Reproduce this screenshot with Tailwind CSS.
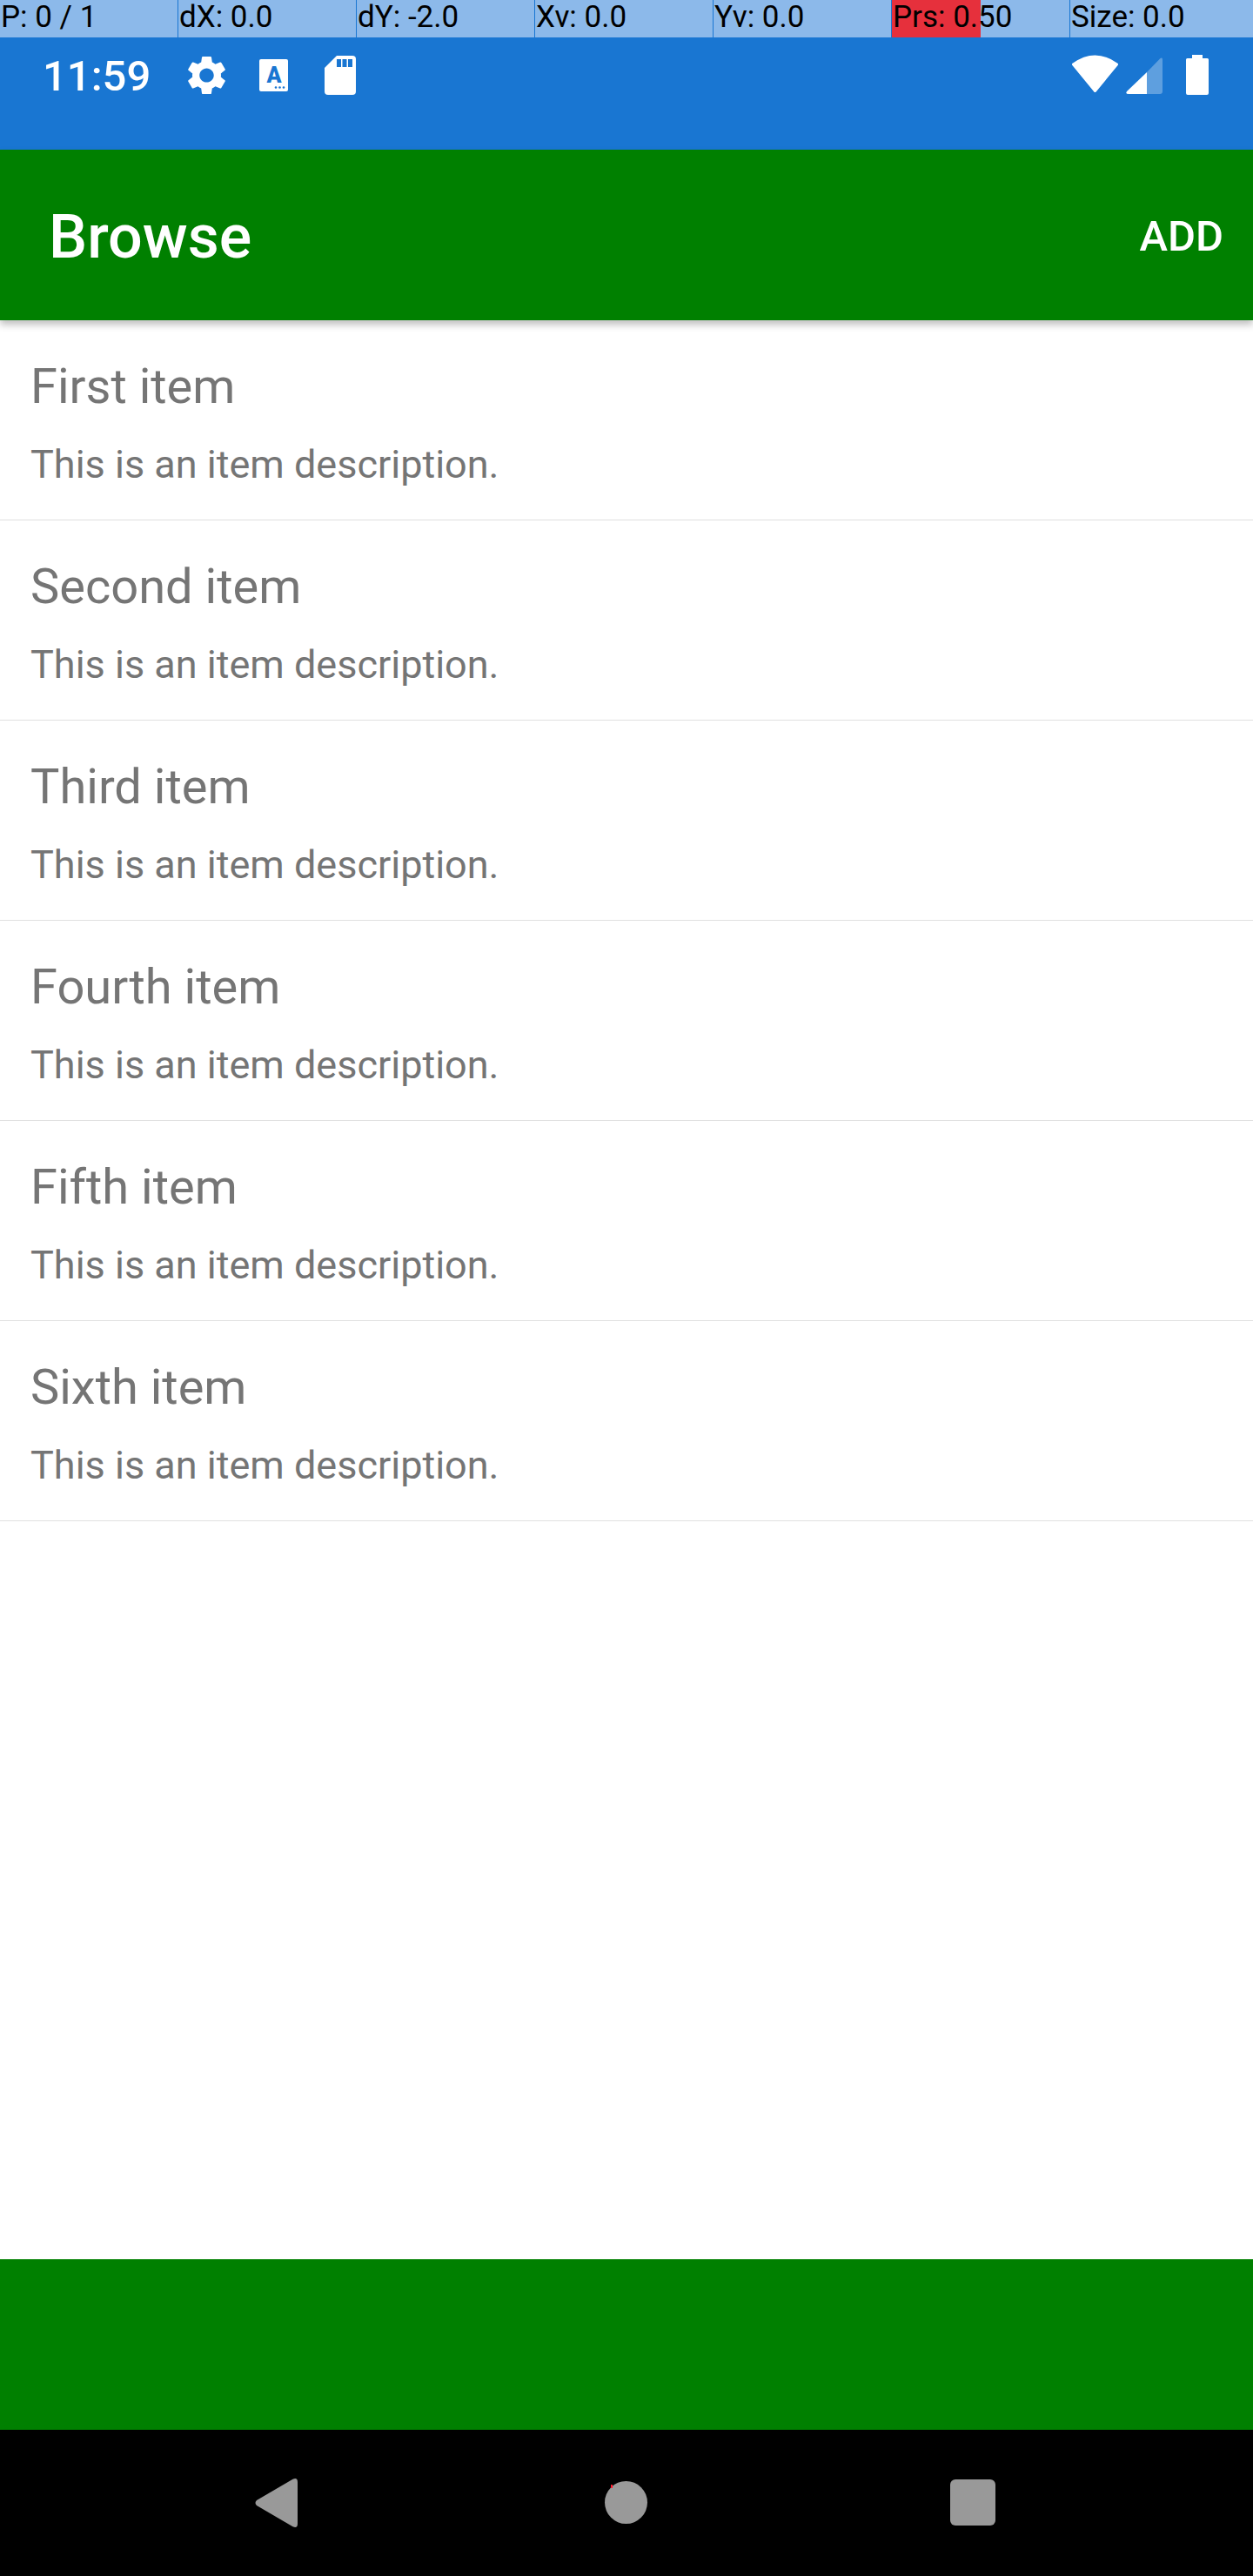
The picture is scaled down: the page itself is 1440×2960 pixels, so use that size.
<!DOCTYPE html>
<html lang="en">

<head>
    <meta charset="UTF-8">
    <meta name="viewport" content="width=device-width, initial-scale=1.0">
    <title>Browse</title>
    <script src="https://cdn.jsdelivr.net/npm/@tailwindcss/browser@4"></script>
</head>

<body class="bg-white font-['Roboto',sans-serif] overflow-hidden">
    <div class="flex flex-col h-[2960px] w-[1440px]">

        <!-- status bar with the pointer location strip on top -->
        <header class="h-[172px] shrink-0 bg-[#1976d2] text-white">
            <div class="grid grid-cols-[205px_205px_205px_205px_205px_205px_1fr] h-[43px] bg-[#8cb9ea] text-black text-[35px] leading-[40px]">
                <div class="pl-[1px] border-r border-[#1976d2]">P: 0 / 1</div>
                <div class="pl-[1px] border-r border-[#1976d2]">dX: 0.0</div>
                <div class="pl-[1px] border-r border-[#1976d2]">dY: -2.0</div>
                <div class="pl-[1px] border-r border-[#1976d2]">Xv: 0.0</div>
                <div class="pl-[1px] border-r border-[#1976d2]">Yv: 0.0</div>
                <div class="relative pl-[1px] border-r border-[#1976d2]">
                    <div class="absolute inset-y-0 left-0 w-1/2 bg-[#e6303c]"></div>
                    <span class="relative">Prs: 0.50</span>
                </div>
                <div class="pl-[1px]">Size: 0.0</div>
            </div>

            <div class="flex items-start pt-[20px] pl-[49px] pr-[51px]">
                <span class="text-[49px] leading-[48px] font-medium w-[167px] mt-[1px]">11:59</span>

                <svg class="w-[43px] h-[45px] mt-[1px]" viewBox="2.6 2 18.8 20" fill="#fff" preserveAspectRatio="none">
                    <path fill-rule="evenodd" d="M19.14 12.94c.04-.3.06-.61.06-.94 0-.32-.02-.64-.07-.94l2.03-1.58c.18-.14.23-.41.12-.61l-1.92-3.32c-.12-.22-.37-.29-.59-.22l-2.39.96c-.5-.38-1.03-.7-1.62-.94l-.36-2.54c-.04-.24-.24-.41-.48-.41h-3.84c-.24 0-.43.17-.47.41l-.36 2.54c-.59.24-1.13.57-1.62.94l-2.39-.96c-.22-.08-.47 0-.59.22L2.74 8.87c-.12.21-.08.47.12.61l2.03 1.58c-.05.3-.09.63-.09.94s.02.64.07.94l-2.03 1.58c-.18.14-.23.41-.12.61l1.92 3.32c.12.22.37.29.59.22l2.39-.96c.5.38 1.03.7 1.62.94l.36 2.54c.05.24.24.41.48.41h3.84c.24 0 .44-.17.47-.41l.36-2.54c.59-.24 1.13-.56 1.62-.94l2.39.96c.22.08.47 0 .59-.22l1.92-3.32c.12-.22.07-.47-.12-.61l-2.01-1.58zM12 15.6c-1.98 0-3.6-1.62-3.6-3.6s1.62-3.6 3.6-3.6 3.6 1.62 3.6 3.6-1.62 3.6-3.6 3.6z" />
                </svg>

                <!-- keyboard notification badge -->
                <svg class="w-[33px] h-[37px] ml-[39px] mt-[5px]" viewBox="0 0 33 37">
                    <rect width="33" height="37" rx="2" fill="#fff" />
                    <text x="17" y="27" text-anchor="middle" font-family="Roboto" font-weight="900" font-size="25" fill="#1976d2">A</text>
                    <circle cx="19" cy="32.500" r="1.300" fill="#1976d2" />
                    <circle cx="23.500" cy="32.500" r="1.300" fill="#1976d2" />
                    <circle cx="28" cy="32.500" r="1.300" fill="#1976d2" />
                </svg>

                <!-- sd card -->
                <svg class="w-[36px] h-[45px] ml-[42px] mt-[1px]" viewBox="0 0 36 45">
                    <path d="M14 0H32a4 4 0 0 1 4 4V41a4 4 0 0 1-4 4H4a4 4 0 0 1-4-4V14Z" fill="#fff" />
                    <path d="M14 4h5v9h-5zM20.500 4h5v9h-5zM27 4h5v9h-5z" fill="#1976d2" />
                </svg>

                <!-- wifi -->
                <svg class="w-[53px] h-[43px] ml-auto" viewBox="0 0 53 43" fill="#fff" stroke="#fff" stroke-width="3" stroke-linejoin="round">
                    <path d="M1.500 11Q26.500 -7 51.500 11L26.500 41.500Z" />
                </svg>

                <!-- cell signal -->
                <svg class="w-[42px] h-[42px] ml-[9px] mt-[3px]" viewBox="0 0 42 42">
                    <path d="M24 17 39 1.500Q42 -1 42 3V39Q42 42 39 42H24Z" fill="#fff" fill-opacity=".3" />
                    <path d="M24 17V42H3Q-1 42 1 39Z" fill="#fff" />
                </svg>

                <!-- battery -->
                <svg class="w-[26px] h-[46px] ml-[27px]" viewBox="0 0 26 46">
                    <path d="M7 0h12v4h5.500a1.500 1.500 0 0 1 1.500 1.500V44a2 2 0 0 1-2 2H2a2 2 0 0 1-2-2V5.500A1.500 1.500 0 0 1 1.500 4H7Z" fill="#fff" />
                </svg>
            </div>
        </header>

        <!-- action bar -->
        <div class="relative z-10 h-[196px] shrink-0 bg-[#008000] flex items-center justify-between pt-[4px] pl-[56px] pr-[34px] text-white shadow-[0_5px_8px_rgba(0,0,0,0.25)]">
            <h1 class="text-[70px] font-medium">Browse</h1>
            <button class="text-[49px] font-medium">ADD</button>
        </div>

        <!-- item list -->
        <ul class="flex-1 text-[#757575]">
            <li class="h-[230px] pl-[35px] border-b border-[#e0e0e0]">
                <p class="text-[56px] leading-[66px] pt-[43px]">First item</p>
                <p class="text-[45px] leading-[53px] mt-[30px]">This is an item description.</p>
            </li>
            <li class="h-[230px] pl-[35px] border-b border-[#e0e0e0]">
                <p class="text-[56px] leading-[66px] pt-[43px]">Second item</p>
                <p class="text-[45px] leading-[53px] mt-[30px]">This is an item description.</p>
            </li>
            <li class="h-[230px] pl-[35px] border-b border-[#e0e0e0]">
                <p class="text-[56px] leading-[66px] pt-[43px]">Third item</p>
                <p class="text-[45px] leading-[53px] mt-[30px]">This is an item description.</p>
            </li>
            <li class="h-[230px] pl-[35px] border-b border-[#e0e0e0]">
                <p class="text-[56px] leading-[66px] pt-[43px]">Fourth item</p>
                <p class="text-[45px] leading-[53px] mt-[30px]">This is an item description.</p>
            </li>
            <li class="h-[230px] pl-[35px] border-b border-[#e0e0e0]">
                <p class="text-[56px] leading-[66px] pt-[43px]">Fifth item</p>
                <p class="text-[45px] leading-[53px] mt-[30px]">This is an item description.</p>
            </li>
            <li class="h-[230px] pl-[35px] border-b border-[#e0e0e0]">
                <p class="text-[56px] leading-[66px] pt-[43px]">Sixth item</p>
                <p class="text-[45px] leading-[53px] mt-[30px]">This is an item description.</p>
            </li>
        </ul>

        <!-- empty bottom bar -->
        <div class="h-[196px] shrink-0 bg-[#008000]"></div>

        <!-- navigation bar -->
        <nav class="h-[168px] shrink-0 bg-black flex items-start pt-[56px] pl-[293px]">
            <svg class="w-[49px] h-[56px]" viewBox="0 0 49 56" fill="#999">
                <path d="M43.500 .8Q49 -1.500 49 4V52Q49 57.500 43.500 55.200L2 31Q-1 28 2 25Z" />
            </svg>
            <div class="relative w-[49px] h-[49px] ml-[353px] mt-[3px] rounded-full bg-[#999]">
                <div class="absolute left-[7px] top-[4px] w-[2px] h-[4px] bg-[#ff1a2e]"></div>
            </div>
            <div class="w-[52px] h-[53px] ml-[348px] mt-[1px] rounded-[6px] bg-[#999]"></div>
        </nav>
    </div>
</body>

</html>
